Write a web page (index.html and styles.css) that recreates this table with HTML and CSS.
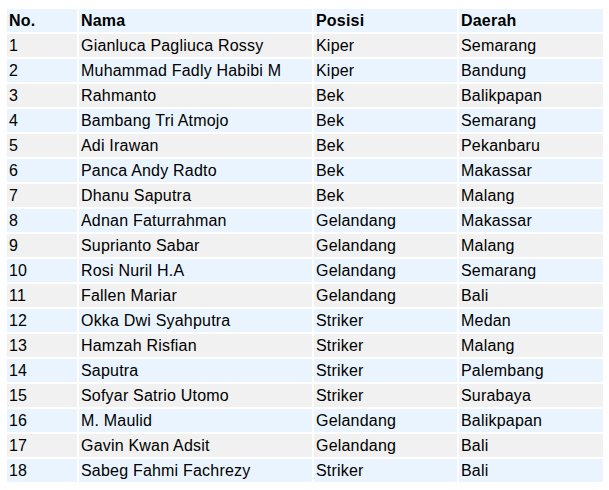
FILE: index.html
```html
<!DOCTYPE html>
<html>
<head>
<meta charset="utf-8">
<link rel="stylesheet" href="styles.css">
</head>
<body>
<table class="players">
<colgroup><col class="c-no"><col class="c-nama"><col class="c-pos"><col class="c-dae"></colgroup>
<thead>
<tr><th>No.</th><th>Nama</th><th>Posisi</th><th>Daerah</th></tr>
</thead>
<tbody>
<tr><td>1</td><td>Gianluca Pagliuca Rossy</td><td>Kiper</td><td>Semarang</td></tr>
<tr><td>2</td><td>Muhammad Fadly Habibi M</td><td>Kiper</td><td>Bandung</td></tr>
<tr><td>3</td><td>Rahmanto</td><td>Bek</td><td>Balikpapan</td></tr>
<tr><td>4</td><td>Bambang Tri Atmojo</td><td>Bek</td><td>Semarang</td></tr>
<tr><td>5</td><td>Adi Irawan</td><td>Bek</td><td>Pekanbaru</td></tr>
<tr><td>6</td><td>Panca Andy Radto</td><td>Bek</td><td>Makassar</td></tr>
<tr><td>7</td><td>Dhanu Saputra</td><td>Bek</td><td>Malang</td></tr>
<tr><td>8</td><td>Adnan Faturrahman</td><td>Gelandang</td><td>Makassar</td></tr>
<tr><td>9</td><td>Suprianto Sabar</td><td>Gelandang</td><td>Malang</td></tr>
<tr><td>10</td><td>Rosi Nuril H.A</td><td>Gelandang</td><td>Semarang</td></tr>
<tr><td>11</td><td>Fallen Mariar</td><td>Gelandang</td><td>Bali</td></tr>
<tr><td>12</td><td>Okka Dwi Syahputra</td><td>Striker</td><td>Medan</td></tr>
<tr><td>13</td><td>Hamzah Risfian</td><td>Striker</td><td>Malang</td></tr>
<tr><td>14</td><td>Saputra</td><td>Striker</td><td>Palembang</td></tr>
<tr><td>15</td><td>Sofyar Satrio Utomo</td><td>Striker</td><td>Surabaya</td></tr>
<tr><td>16</td><td>M. Maulid</td><td>Gelandang</td><td>Balikpapan</td></tr>
<tr><td>17</td><td>Gavin Kwan Adsit</td><td>Gelandang</td><td>Bali</td></tr>
<tr><td>18</td><td>Sabeg Fahmi Fachrezy</td><td>Striker</td><td>Bali</td></tr>
</tbody>
</table>
</body>
</html>
```
FILE: styles.css
```css
html, body {
  margin: 0;
  padding: 0;
  background: #ffffff;
}
body {
  padding: 7px 0 0 5px;
  font-family: "Liberation Sans", Arial, sans-serif;
  font-size: 16px;
  letter-spacing: 0.2px;
  color: #000000;
}
.players {
  border-collapse: separate;
  border-spacing: 2px;
  table-layout: fixed;
  width: 600px;
}
.c-no { width: 70px; }
.c-nama { width: 233px; }
.c-pos { width: 143px; }
.c-dae { width: 144px; }
.players th,
.players td {
  height: 23px;
  box-sizing: border-box;
  padding: 0 2px;
  line-height: 18px;
  text-align: left;
  vertical-align: middle;
  white-space: nowrap;
}
.players th {
  font-weight: bold;
  background: #eaf4fe;
}
.players tbody tr:nth-child(odd) td {
  background: #f1f1f1;
}
.players tbody tr:nth-child(even) td {
  background: #eaf4fe;
}
```
